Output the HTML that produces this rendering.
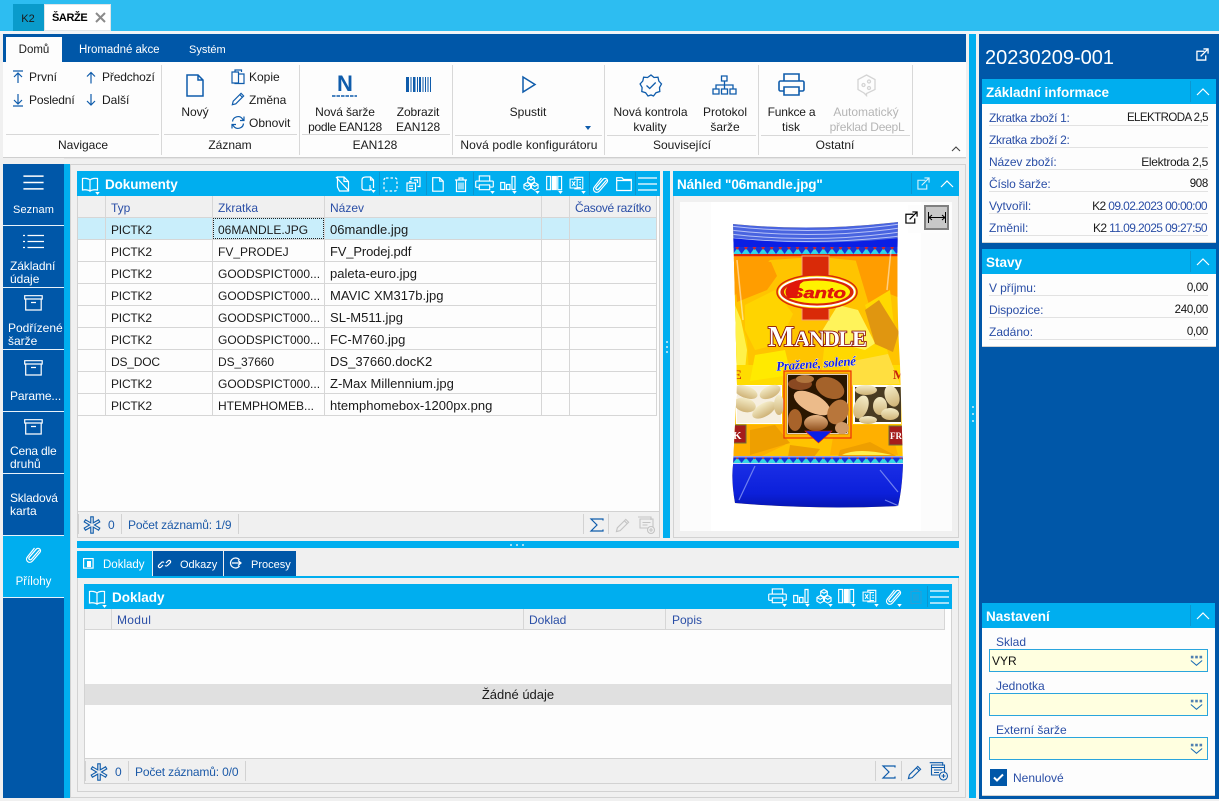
<!DOCTYPE html>
<html lang="cs"><head><meta charset="utf-8"><title>Šarže</title>
<style>
html,body{margin:0;padding:0;background:#f0f0f0}
#p{position:relative;width:1219px;height:801px;overflow:hidden;background:#f0f0f0;font-family:"Liberation Sans",sans-serif;font-size:12px;color:#1a1a1a}
#p div,#p span.t,#p svg{position:absolute}
.t{position:absolute;white-space:nowrap;line-height:16px}
.c{transform:translateX(-50%);text-align:center}
.r{transform:translateX(-100%)}
.w{color:#fff}.b{color:#1c5aa8}.l{color:#2a4ea6}.h{font-weight:bold;font-size:13.5px;color:#fff}
.g{color:#b5b5b5}
.n{font-size:13px;letter-spacing:.02px}
.v{font-size:11.5px;letter-spacing:-.3px;color:#111}
svg{overflow:visible}
.rb{fill:none;stroke:#0f5cab;stroke-width:1.2}
.wi{fill:none;stroke:#fff;stroke-width:1.2;color:#fff}
</style></head><body><div id="p">
<svg width="0" height="0" style="left:0;top:0"><defs>
<symbol id="prn" viewBox="0 0 20 18" overflow="visible"><path d="M4.500 6V1h11v5M4 13H1.500A.8.8 0 0 1 .7 12V7.200A.8.8 0 0 1 1.500 6.400h17a.8.8 0 0 1 .8.8V12a.8.8 0 0 1-.8.8H16M4.500 10.500h11v5h-11z"/></symbol>
<symbol id="bars" viewBox="0 0 16 18" overflow="visible"><path d="M.7 7.500h4v7h-4zM6.500 9.500h3.500v5H6.500zM12 1.500h3v13h-3z"/></symbol>
<symbol id="cube" viewBox="0 0 17 18" overflow="visible"><path d="M8.500 1.500l3.500 2v4l-3.500 2-3.500-2v-4zM4.500 8l3.500 2v4l-3.500 2-3.500-2v-4zM12.500 8l3.500 2v4l-3.500 2-3.500-2v-4zM5 3.500l3.500 2 3.500-2M1 10l3.500 2 3.500-2M9 10l3.500 2 3.500-2"/></symbol>
<symbol id="cols" viewBox="0 0 18 18" overflow="visible"><path d="M.7 1.500h4v14h-4zM12.500 1.500h4v14h-4z"/><path d="M6 1h5.500v15H6z" fill="currentColor" stroke="none"/></symbol>
<symbol id="xls" viewBox="0 0 17 18" overflow="visible"><path d="M6 3.500V1.500h9v13H6v-1M9 4h4M11 7h2M11 10h2M9 13h4"/><path d="M.7 3.500h8v10h-8zM3 6l3.500 5M6.500 6L3 11"/></symbol>
<symbol id="clip" viewBox="0 0 17 18" overflow="visible"><path d="M14.500 5L6.500 14.200c-1.400 1.600-3.600-.4-2.200-2L11.200 4.200c2.200-2.500 5.800.7 3.700 3.200L7.500 16c-3.200 3.500-8-.7-5-4.200L9.500 3"/></symbol>
<symbol id="ham" viewBox="0 0 19 16" overflow="visible"><path d="M0 2h19M0 8h19M0 14h19" stroke-width="1.300"/></symbol>
<symbol id="book" viewBox="0 0 18 16" overflow="visible"><path d="M9 3C7.500 1.500 4 1 1.500 1.500v11.500c2.500-.5 6-.2 7.500 1.200 1.500-1.400 5-1.700 7.500-1.200V1.500C14 1 10.500 1.500 9 3v11"/></symbol>
<symbol id="ext" viewBox="0 0 14 14" overflow="visible"><path d="M9 3.500H1v9.500h9.500V8M5 9l8-8M8 1h5v5"/></symbol>
<symbol id="up" viewBox="0 0 14 8" overflow="visible"><path d="M1 7l6-6 6 6"/></symbol>
<symbol id="snow" viewBox="0 0 16 16" overflow="visible"><path d="M8 1v14M1.900 4.500l12.200 7M1.900 11.500l12.200-7" fill="none" stroke="#0f5cab" stroke-width="3.600" stroke-linecap="square"/><path d="M8 1v14M1.900 4.500l12.200 7M1.900 11.500l12.200-7" fill="none" stroke="#f0f0f0" stroke-width="1.300" stroke-linecap="square"/></symbol>
<symbol id="dd" viewBox="1 1 15 12" overflow="visible"><path d="M2 1.500h3v3H2zM7 1.500h3v3H7zM12 1.500h3v3h-3z" fill="#4f7fb0" stroke="none"/><path d="M2 7l6.500 5.500L15 7" fill="none" stroke="#1c6db5" stroke-width="1.200"/></symbol>
<symbol id="pen" viewBox="0 0 16 16" overflow="visible"><path d="M1.500 14.500l1-4L11.500 1.500l3 3-9 9zM10 3l3 3"/></symbol>
<symbol id="tri" viewBox="0 0 6 4"><path d="M0 0h6L3 4z" fill="#fff"/></symbol>
<pattern id="zig" width="8.600" height="8" patternUnits="userSpaceOnUse" x="733" y="247"><rect width="8.600" height="8" fill="#1530d8"/><path d="M0 7L4.300 1l4.300 6z" fill="#33d6e6"/><path d="M2.300 0h4l-2 3z" fill="#d8202c"/></pattern>
<pattern id="zig2" width="8.600" height="6" patternUnits="userSpaceOnUse" x="733" y="457"><rect width="8.600" height="6" fill="#1530d8"/><path d="M0 6L4.300 .5l4.300 5.500z" fill="#33d6e6"/><path d="M2.500 0h3.600l-1.800 2.500z" fill="#d8202c"/></pattern>
<linearGradient id="bl" x1="0" y1="0" x2="0" y2="1"><stop offset="0" stop-color="#1a2ee6"/><stop offset=".65" stop-color="#0c20da"/><stop offset="1" stop-color="#0615b0"/></linearGradient>
<linearGradient id="al" x1="0" y1="0" x2="0" y2="1"><stop offset="0" stop-color="#e8b888"/><stop offset="1" stop-color="#8f4f1c"/></linearGradient>
<linearGradient id="al2" x1="0" y1="0" x2="0" y2="1"><stop offset="0" stop-color="#f4ecc8"/><stop offset="1" stop-color="#cfb377"/></linearGradient>
<clipPath id="bag"><path d="M733 224Q815 232 898 222Q896 300 900 365L903 465Q902 490 898 506Q815 510 735 503Q731 480 733 465L737 385Q735 300 733 224z"/></clipPath>
<filter id="sf"><feGaussianBlur stdDeviation=".35"/></filter>
</defs></svg>

<!-- top bar -->
<div style="left:0;top:0;width:1219px;height:31px;background:#2dbdf1"></div>
<div style="left:0;top:31px;width:1219px;height:3px;background:#f0f4f7"></div>
<div style="left:13px;top:4px;width:31px;height:27px;background:#0a9bcb"></div>
<span class="t c" style="left:28px;top:11px;font-size:11px">K2</span>
<div style="left:44px;top:4px;width:67px;height:27px;background:#fff;box-shadow:inset 0 0 0 1px #dfe5e8"></div>
<span class="t" style="left:52px;top:10px;font-size:11px;color:#000;font-weight:bold;letter-spacing:-.4px">ŠARŽE</span>
<svg style="left:95px;top:12px" width="11" height="11"><path d="M1 1l9 9M10 1l-9 9" stroke="#8a8a8a" stroke-width="2" fill="none"/></svg>

<!-- ribbon -->
<div style="left:3px;top:34px;width:963px;height:123px;background:#fdfdfd;border-bottom:1px solid #cfcfcf"></div>
<div style="left:3px;top:34px;width:963px;height:28px;background:#0057a8"></div>
<div style="left:6px;top:37px;width:56px;height:25px;background:#fdfdfd"></div>
<span class="t c" style="left:34px;top:42px;font-size:11.500px">Domů</span>
<span class="t w" style="left:79px;top:42px;font-size:11.500px;letter-spacing:-.05px">Hromadné akce</span>
<span class="t w" style="left:189px;top:42px;font-size:11px">Systém</span>

<div style="left:6px;top:134px;width:153px;height:1px;background:#d8d8d8"></div>
<div style="left:164px;top:134px;width:133px;height:1px;background:#d8d8d8"></div>
<div style="left:302px;top:134px;width:148px;height:1px;background:#d8d8d8"></div>
<div style="left:455px;top:135px;width:147px;height:1px;background:#d8d8d8"></div>
<div style="left:607px;top:135px;width:149px;height:1px;background:#d8d8d8"></div>
<div style="left:761px;top:135px;width:149px;height:1px;background:#d8d8d8"></div>
<div style="left:161px;top:65px;width:1px;height:90px;background:#d8d8d8"></div>
<div style="left:299px;top:65px;width:1px;height:90px;background:#d8d8d8"></div>
<div style="left:452px;top:65px;width:1px;height:90px;background:#d8d8d8"></div>
<div style="left:604px;top:65px;width:1px;height:90px;background:#d8d8d8"></div>
<div style="left:758px;top:65px;width:1px;height:90px;background:#d8d8d8"></div>
<div style="left:912px;top:65px;width:1px;height:90px;background:#d8d8d8"></div>

<span class="t c" style="left:83px;top:137px">Navigace</span>
<span class="t c" style="left:230px;top:137px">Záznam</span>
<span class="t c" style="left:375px;top:137px">EAN128</span>
<span class="t c" style="left:529px;top:137px;letter-spacing:.13px">Nová podle konfigurátoru</span>
<span class="t c" style="left:682px;top:137px">Související</span>
<span class="t c" style="left:835px;top:137px">Ostatní</span>

<svg class="rb" style="left:12px;top:70px" width="12" height="14"><path d="M1 1h10M6 13V3.500M2 7l4-4 4 4"/></svg>
<svg class="rb" style="left:85px;top:71px" width="12" height="13"><path d="M6 12.500V1.500M2 5.500l4-4 4 4"/></svg>
<svg class="rb" style="left:12px;top:93px" width="12" height="14"><path d="M1 13h10M6 1v9.500M2 7l4 4 4-4"/></svg>
<svg class="rb" style="left:85px;top:93px" width="12" height="13"><path d="M6 1v11M2 8l4 4 4-4"/></svg>
<span class="t" style="left:29px;top:69px">První</span>
<span class="t" style="left:102px;top:69px;letter-spacing:-.15px">Předchozí</span>
<span class="t" style="left:29px;top:92px;letter-spacing:-.15px">Poslední</span>
<span class="t" style="left:102px;top:92px">Další</span>

<svg class="rb" style="left:186px;top:74px;stroke-width:1.500" width="18" height="23"><path d="M1 1h11l5 5v16H1zM12 1v5h5"/></svg>
<span class="t c" style="left:195px;top:104px">Nový</span>
<svg class="rb" style="left:231px;top:69px" width="14" height="15"><path d="M4 3V1h6.500v2M1 3h6.500v11H1zM7.500 5H13v9.500H4V14"/></svg>
<svg class="rb" style="left:231px;top:92px;stroke-width:1.300" width="14" height="15"><use href="#pen" width="14" height="14"/></svg>
<svg class="rb" style="left:231px;top:115px" width="14" height="15"><path d="M1.500 6.500A5.500 5.500 0 0 1 11.500 4l1.300 1.500M13 1.500v4H9M12.500 8.500A5.500 5.500 0 0 1 2.500 11l-1.300-1.500M1 13.500v-4h4"/></svg>
<span class="t" style="left:249px;top:69px">Kopie</span>
<span class="t" style="left:249px;top:92px">Změna</span>
<span class="t" style="left:249px;top:115px">Obnovit</span>

<span class="t c" style="left:345px;top:72px;font-size:22px;line-height:24px;font-weight:bold;color:#0f5cab">N</span>
<svg style="left:332px;top:95px" width="25" height="2"><path d="M0 1h25" stroke="#0f5cab" stroke-width="1.500" stroke-dasharray="3.500 1"/></svg>
<span class="t c" style="left:345px;top:104px;letter-spacing:-.1px">Nová šarže</span>
<span class="t c" style="left:345px;top:119px;letter-spacing:-.3px">podle EAN128</span>
<svg style="left:406px;top:77px" width="25" height="15"><path d="M0 0h3v15H0zM4.500 0h1v15h-1zM7 0h2.500v15H7zM11 0h1v15h-1zM13 0h2v15h-2zM16.500 0h1v15h-1zM19 0h1v15h-1zM21.500 0h1v15h-1zM24 0h1v15h-1z" fill="#0f5cab"/></svg>
<span class="t c" style="left:418px;top:104px;letter-spacing:-.1px">Zobrazit</span>
<span class="t c" style="left:418px;top:119px;letter-spacing:-.1px">EAN128</span>

<svg class="rb" style="left:522px;top:76px;stroke-width:1.500" width="14" height="17"><path d="M1 1l12 7.500L1 16z"/></svg>
<span class="t c" style="left:528px;top:104px">Spustit</span>
<svg style="left:585px;top:126px" width="6" height="4"><path d="M0 0h6L3 4z" fill="#0f5cab"/></svg>

<svg class="rb" style="left:640px;top:74px;stroke-width:1.300" width="22" height="23"><path d="M11 1l3 2.500 4-.3 .8 3.800 2.700 3-2 3.500.3 4-3.800 1.200L13.500 22 11 21l-3 1-2.400-3.300-3.800-1.200.3-4-2-3.500 2.700-3L3.600 3.200l4 .3zM6.500 11.500l3.200 3 6-6"/></svg>
<span class="t c" style="left:650.500px;top:104px">Nová kontrola</span>
<span class="t c" style="left:650px;top:119px">kvality</span>
<svg class="rb" style="left:712px;top:75px;stroke-width:1.300" width="25" height="20"><path d="M9.500 1h5.500v5H9.500zM1 14h6v5H1zM9.500 14h6v5H9.500zM18 14h6v5h-6zM12.500 6v8M4 14v-4h17v4"/></svg>
<span class="t c" style="left:725px;top:104px">Protokol</span>
<span class="t c" style="left:725px;top:119px">šarže</span>

<svg class="rb" style="left:778px;top:73px;stroke-width:1.600" width="27" height="23"><path d="M6 8V1h15v7M6 18H2.500a1.500 1.500 0 0 1-1.500-1.500V9.500A1.500 1.500 0 0 1 2.500 8h22A1.500 1.500 0 0 1 26 9.500v7a1.500 1.500 0 0 1-1.500 1.500H21M6 14h15v8H6z"/></svg>
<span class="t c" style="left:791.500px;top:104px;letter-spacing:-.2px">Funkce a</span>
<span class="t c" style="left:791px;top:119px">tisk</span>
<svg style="left:857px;top:74px" width="19" height="22" fill="none" stroke="#d4d4d4" stroke-width="1.300"><path d="M9.500 1l8.500 4.500v10L9.500 19.500 9.500 21.500 7 19 1 15.500v-10z"/><circle cx="6.500" cy="11" r="1.500"/><circle cx="12" cy="7.500" r="1.500"/><circle cx="12" cy="14" r="1.500"/></svg>
<span class="t c g" style="left:866px;top:104px">Automatický</span>
<span class="t c g" style="left:867px;top:119px;letter-spacing:-.25px">překlad DeepL</span>
<svg style="left:951px;top:146px" width="10" height="6"><path d="M1 5l4-4 4 4" fill="none" stroke="#444" stroke-width="1.100"/></svg>

<!-- main frame -->
<div style="left:64px;top:158px;width:902px;height:1px;background:#e4e4e4"></div>
<div style="left:70px;top:164px;width:896px;height:634px;box-sizing:border-box;border:1px solid #d2d2d2"></div>
<div style="left:64px;top:164px;width:6px;height:634px;background:#00aeef"></div>
<div style="left:3px;top:164px;width:61px;height:634px;background:#0057a8"></div>
<div style="left:3px;top:536px;width:61px;height:61px;background:#00aeef"></div>
<div style="left:3px;top:225px;width:61px;height:1px;background:#e8f2fa"></div>
<div style="left:3px;top:287px;width:61px;height:1px;background:#e8f2fa"></div>
<div style="left:3px;top:349px;width:61px;height:1px;background:#e8f2fa"></div>
<div style="left:3px;top:411px;width:61px;height:1px;background:#e8f2fa"></div>
<div style="left:3px;top:473px;width:61px;height:1px;background:#e8f2fa"></div>
<div style="left:3px;top:535px;width:61px;height:1px;background:#e8f2fa"></div>
<div style="left:3px;top:597px;width:61px;height:1px;background:#e8f2fa"></div>
<svg style="left:23px;top:174px" width="21" height="17"><use href="#ham" width="21" height="17" stroke="#fff" fill="none"/></svg>
<span class="t c w" style="left:33.500px;top:202px;font-size:11px;letter-spacing:.1px">Seznam</span>
<svg style="left:23px;top:234px" width="21" height="15" fill="none" stroke="#fff" stroke-width="1.200"><path d="M4.500 1.500H21M4.500 7.500H21M4.500 13.500H21M0 1.500h2M0 7.500h2M0 13.500h2"/></svg>
<span class="t w" style="left:10px;top:258px;letter-spacing:-.1px">Základní</span>
<span class="t w" style="left:10px;top:271px">údaje</span>
<svg class="wi" style="left:24px;top:295px" width="19" height="16"><path d="M.7.700h17.500v3.300H.7zM1.700 4v11h15.500V4M7 7.500h5"/></svg>
<span class="t w" style="left:8px;top:320px">Podřízené</span>
<span class="t w" style="left:8px;top:333px">šarže</span>
<svg class="wi" style="left:24px;top:360px" width="19" height="16"><path d="M.7.700h17.500v3.300H.7zM1.700 4v11h15.500V4M7 7.500h5"/></svg>
<span class="t w" style="left:10px;top:388px;letter-spacing:-.1px">Parame...</span>
<svg class="wi" style="left:24px;top:419px" width="19" height="16"><path d="M.7.700h17.500v3.300H.7zM1.700 4v11h15.500V4M7 7.500h5"/></svg>
<span class="t w" style="left:10px;top:443px;letter-spacing:-.2px">Cena dle</span>
<span class="t w" style="left:10px;top:456px">druhů</span>
<span class="t w" style="left:10px;top:490px;letter-spacing:-.2px">Skladová</span>
<span class="t w" style="left:10px;top:503px">karta</span>
<svg class="wi" style="left:25px;top:545px" width="17" height="18"><use href="#clip" width="17" height="18"/></svg>
<span class="t c w" style="left:33.500px;top:574px;font-size:11.500px">Přílohy</span>

<!-- Dokumenty panel -->
<div style="left:77px;top:171px;width:583px;height:367px;box-sizing:border-box;border:1px solid #d2d2d2;background:#fdfdfd"></div>
<div style="left:77px;top:171px;width:583px;height:25px;background:#00aeef"></div>
<svg class="wi" style="left:81px;top:177px" width="18" height="16"><use href="#book" width="18" height="16"/></svg>
<svg style="left:95px;top:192px" width="5" height="3"><use href="#tri" width="5" height="3"/></svg>
<span class="t h" style="left:105px;top:177px;letter-spacing:-.1px">Dokumenty</span>

<svg class="wi" style="left:335px;top:176px" width="15" height="16"><path d="M2.500 1h6.500l4.500 4.500V15h-9L2.500 11zM1 1l13 14M9 1v4.500h4.500"/></svg>
<svg class="wi" style="left:361px;top:176px" width="14" height="16"><path d="M5 1h4.500l3 3v8M9.500 1v3h3M5 1Q1 1 1 4v8q0 2 3 2h5"/><path d="M9 9v5l2-1"/></svg>
<svg style="left:371px;top:190px" width="5" height="3"><use href="#tri" width="5" height="3"/></svg>
<svg class="wi" style="left:383px;top:177px;stroke-dasharray:2.500 2" width="15" height="15"><rect x="1" y="1" width="13" height="13" rx="2"/></svg>
<svg class="wi" style="left:406px;top:176px" width="15" height="16"><path d="M5 4V1.500h9v9h-2.500M3 5.500h2.500M1 7h8.500v8H1zM3 10h4M3 12.500h4M8 4h3.500v3"/></svg>
<svg class="wi" style="left:432px;top:177px" width="12" height="15"><path d="M.7.700h7l3.500 3.500v10H.7zM7.700.7v3.500h3.500"/></svg>
<svg class="wi" style="left:455px;top:177px" width="12" height="15"><path d="M0 3h12M4 3V1h4v2M1.500 3v11.500h9V3"/><path d="M4 5.500v7M6 5.500v7M8 5.500v7" stroke-width="1.100"/></svg>
<svg class="wi" style="left:475px;top:175px" width="19" height="17"><use href="#prn" width="19" height="17"/></svg>
<svg style="left:490px;top:191px" width="5" height="3"><use href="#tri" width="5" height="3"/></svg>
<svg class="wi" style="left:500px;top:175px" width="16" height="18"><use href="#bars" width="16" height="18"/></svg>
<svg style="left:512px;top:191px" width="5" height="3"><use href="#tri" width="5" height="3"/></svg>
<svg class="wi" style="left:523px;top:175px" width="16" height="17"><use href="#cube" width="16" height="17"/></svg>
<svg style="left:535px;top:191px" width="5" height="3"><use href="#tri" width="5" height="3"/></svg>
<svg class="wi" style="left:546px;top:175px;color:#fff" width="17" height="17"><use href="#cols" width="17" height="17"/></svg>
<svg style="left:558px;top:191px" width="5" height="3"><use href="#tri" width="5" height="3"/></svg>
<svg class="wi" style="left:569px;top:176px" width="16" height="16"><use href="#xls" width="16" height="16"/></svg>
<svg style="left:581px;top:191px" width="5" height="3"><use href="#tri" width="5" height="3"/></svg>
<svg class="wi" style="left:592px;top:175px" width="17" height="18"><use href="#clip" width="17" height="18"/></svg>
<svg class="wi" style="left:616px;top:177px" width="16" height="14"><path d="M.7 2.500V13.500H15.300V2.500H7.500L6 .7H.7zM.7 3.500h14.600"/></svg>
<svg class="wi" style="left:638px;top:176px" width="19" height="16"><use href="#ham" width="19" height="16"/></svg>
<svg style="left:379px;top:172px" width="1" height="23"><path d="M.5 0v23" stroke="#0c96d0"/></svg>
<svg style="left:426px;top:172px" width="1" height="23"><path d="M.5 0v23" stroke="#0c96d0"/></svg>
<svg style="left:473px;top:172px" width="1" height="23"><path d="M.5 0v23" stroke="#0c96d0"/></svg>
<svg style="left:589px;top:172px" width="1" height="23"><path d="M.5 0v23" stroke="#0c96d0"/></svg>
<svg style="left:635px;top:172px" width="1" height="23"><path d="M.5 0v23" stroke="#0c96d0"/></svg>

<div style="left:78px;top:196px;width:579px;height:22px;background:#f0f0f0"></div>
<div style="left:78px;top:218px;width:579px;height:21px;background:#c9eefb"></div>
<div style="left:78px;top:217px;width:579px;height:1px;background:#d6d6d6"></div>
<div style="left:78px;top:239px;width:579px;height:1px;background:#d6d6d6"></div>
<div style="left:78px;top:261px;width:579px;height:1px;background:#d6d6d6"></div>
<div style="left:78px;top:283px;width:579px;height:1px;background:#d6d6d6"></div>
<div style="left:78px;top:305px;width:579px;height:1px;background:#d6d6d6"></div>
<div style="left:78px;top:327px;width:579px;height:1px;background:#d6d6d6"></div>
<div style="left:78px;top:349px;width:579px;height:1px;background:#d6d6d6"></div>
<div style="left:78px;top:371px;width:579px;height:1px;background:#d6d6d6"></div>
<div style="left:78px;top:393px;width:579px;height:1px;background:#d6d6d6"></div>
<div style="left:78px;top:415px;width:579px;height:1px;background:#d6d6d6"></div>
<div style="left:105px;top:196px;width:1px;height:220px;background:#d6d6d6"></div>
<div style="left:212px;top:196px;width:1px;height:220px;background:#d6d6d6"></div>
<div style="left:324px;top:196px;width:1px;height:220px;background:#d6d6d6"></div>
<div style="left:541px;top:196px;width:1px;height:220px;background:#d6d6d6"></div>
<div style="left:569px;top:196px;width:1px;height:220px;background:#d6d6d6"></div>
<div style="left:656px;top:196px;width:1px;height:220px;background:#d6d6d6"></div>
<div style="left:213px;top:218px;width:111px;height:21px;box-sizing:border-box;border:1px dotted #222"></div>

<span class="t l" style="left:111px;top:200px">Typ</span>
<span class="t l" style="left:218px;top:200px">Zkratka</span>
<span class="t l" style="left:330px;top:200px">Název</span>
<span class="t l" style="left:575px;top:200px;letter-spacing:-.3px">Časové razítko</span>

<span class="t" style="left:111px;top:222px;letter-spacing:-.2px">PICTK2</span><span class="t" style="left:218px;top:222px">06MANDLE.JPG</span><span class="t n" style="left:330px;top:222px">06mandle.jpg</span>
<span class="t" style="left:111px;top:244px;letter-spacing:-.2px">PICTK2</span><span class="t" style="left:218px;top:244px">FV_PRODEJ</span><span class="t n" style="left:330px;top:244px;letter-spacing:-.15px">FV_Prodej.pdf</span>
<span class="t" style="left:111px;top:266px;letter-spacing:-.2px">PICTK2</span><span class="t" style="left:218px;top:266px">GOODSPICT000...</span><span class="t n" style="left:330px;top:266px">paleta-euro.jpg</span>
<span class="t" style="left:111px;top:288px;letter-spacing:-.2px">PICTK2</span><span class="t" style="left:218px;top:288px">GOODSPICT000...</span><span class="t n" style="left:330px;top:288px">MAVIC XM317b.jpg</span>
<span class="t" style="left:111px;top:310px;letter-spacing:-.2px">PICTK2</span><span class="t" style="left:218px;top:310px">GOODSPICT000...</span><span class="t n" style="left:330px;top:310px">SL-M511.jpg</span>
<span class="t" style="left:111px;top:332px;letter-spacing:-.2px">PICTK2</span><span class="t" style="left:218px;top:332px">GOODSPICT000...</span><span class="t n" style="left:330px;top:332px">FC-M760.jpg</span>
<span class="t" style="left:111px;top:354px;letter-spacing:-.2px">DS_DOC</span><span class="t" style="left:218px;top:354px;letter-spacing:-.1px">DS_37660</span><span class="t n" style="left:330px;top:354px">DS_37660.docK2</span>
<span class="t" style="left:111px;top:376px;letter-spacing:-.2px">PICTK2</span><span class="t" style="left:218px;top:376px">GOODSPICT000...</span><span class="t n" style="left:330px;top:376px">Z-Max Millennium.jpg</span>
<span class="t" style="left:111px;top:398px;letter-spacing:-.2px">PICTK2</span><span class="t" style="left:218px;top:398px">HTEMPHOMEB...</span><span class="t n" style="left:330px;top:398px">htemphomebox-1200px.png</span>

<!-- status 1 -->
<div style="left:78px;top:511px;width:581px;height:26px;background:#f0f0f0;border-top:1px solid #d2d2d2;box-sizing:border-box"></div>
<div style="left:78px;top:514px;width:1px;height:20px;background:#d2d2d2"></div>
<svg style="left:84px;top:517px" width="16" height="16"><use href="#snow" width="16" height="16"/></svg>
<span class="t b" style="left:108px;top:517px">0</span>
<div style="left:121px;top:514px;width:1px;height:20px;background:#d2d2d2"></div>
<span class="t b" style="left:128px;top:517px;letter-spacing:-.15px">Počet záznamů: 1/9</span>
<div style="left:238px;top:514px;width:1px;height:20px;background:#d2d2d2"></div>
<div style="left:583px;top:514px;width:1px;height:20px;background:#d2d2d2"></div>
<svg style="left:590px;top:518px" width="14" height="14"><path d="M13 2.500V1H1l6 6-6 6h12v-1.500" fill="none" stroke="#0f5cab" stroke-width="1.200"/></svg>
<div style="left:608px;top:514px;width:1px;height:20px;background:#d2d2d2"></div>
<svg style="left:615px;top:518px;fill:none;stroke:#c4c4c4;stroke-width:1.200" width="15" height="15"><use href="#pen" width="15" height="15"/></svg>
<svg style="left:637px;top:516px;fill:none;stroke:#c4c4c4;stroke-width:1.100" width="18" height="18"><path d="M1 1h13v3M3 3h13v9H3zM5.500 6.500h8M5.500 9h5"/><circle cx="14" cy="14" r="3.500" fill="#f0f0f0"/><path d="M12 14h4M14 12v4"/></svg>

<!-- vertical splitter -->
<div style="left:663px;top:171px;width:7px;height:367px;background:#00aeef"></div>
<div style="left:665.500px;top:341px;width:2px;height:2px;background:#9fdff7"></div>
<div style="left:665.500px;top:346px;width:2px;height:2px;background:#9fdff7"></div>
<div style="left:665.500px;top:351px;width:2px;height:2px;background:#9fdff7"></div>

<!-- Nahled -->
<div style="left:673px;top:171px;width:286px;height:367px;box-sizing:border-box;border:1px solid #d2d2d2;background:#f0f0f0"></div>
<div style="left:673px;top:171px;width:286px;height:25px;background:#00aeef"></div>
<span class="t h" style="left:677px;top:177px;letter-spacing:-.1px">Náhled "06mandle.jpg"</span>
<div style="left:911px;top:173px;width:1px;height:21px;background:#0c96d0"></div>
<svg class="wi" style="left:917px;top:177px;stroke:#d6f2fc" width="13" height="13"><use href="#ext" width="13" height="13"/></svg>
<svg class="wi" style="left:940px;top:180px" width="14" height="8"><use href="#up" width="14" height="8"/></svg>
<div style="left:680px;top:202px;width:272px;height:329px;background:#fcfcfc"></div>
<div style="left:711px;top:202px;width:210px;height:329px;background:#fff"></div>

<svg style="left:680px;top:202px" width="272" height="329" viewBox="680 202 272 329">
<g clip-path="url(#bag)">
<rect x="725" y="215" width="185" height="300" fill="#ffc400"/>
<path d="M725 257H905V300L880 290 870 262 830 258 800 258 770 260 730 300z" fill="#ff9d00"/>
<path d="M733 258l38 4 6 14-10 14-30 12zM855 258h45v22l-30 28-6-20z" fill="#ff9d00"/>
<path d="M745 305l30-15 18 24-14 30-24 6-10-20zM733 300l14 40 3 50-17-5z" fill="#ffd400"/>
<path d="M733 300l8 20 6 30-3 30-11 0z" fill="#fff14a"/>
<path d="M838 305l20 5 18 35-16 30-30-6-8-38z" fill="#fff35a"/>
<path d="M865 305l25-15 5 45-14 20zM825 340l40 10 18-12 12 35-75 12z" fill="#ffd800"/>
<path d="M865 310l14-10 20 32-6 20-18-8z" fill="#e09610"/>
<path d="M733 365h55v20h-55zM848 365h52v22h-52z" fill="#ffdc00"/>
<path d="M755 355l30-5 6 25-41 6z" fill="#ffea00"/>
<path d="M848 362l40-8 12 30-48 2z" fill="#ffdf40"/>
<path d="M735 425h50v20l-25 12h-27zM835 425h55l8 30h-68z" fill="#ffb000"/>
<path d="M750 430l25-5 15 18-40 12zM790 445l30 4-6 8h-26zM840 450l30-8 28 15h-60z" fill="#ee9f00"/>
<path d="M842 455q15-8 50 0z" fill="#fff04e"/>
<rect x="725" y="215" width="185" height="32" fill="#4964e0"/>
<path d="M730 226Q815 236 900 224M730 230Q815 240 900 228M730 234Q815 244 900 232M730 238Q815 246 900 236" fill="none" stroke="#b7c2f7" stroke-width="1"/>
<path d="M733 223Q815 230 898 221" fill="none" stroke="#fff" stroke-width="1.500" stroke-dasharray="1.500 1.500"/>
<path d="M730 238Q815 247 900 238V248H730z" fill="#0a1fe4"/>
<rect x="725" y="247" width="185" height="7" fill="url(#zig)"/>
<rect x="725" y="254" width="185" height="2" fill="#d8260a"/>
<rect x="725" y="256" width="185" height="1" fill="#ff7a10"/>
<rect x="802" y="256" width="27" height="64" fill="#d92a08" stroke="#f6a070" stroke-width="1"/>
<ellipse cx="817" cy="292" rx="40" ry="17" fill="#ffd800" stroke="#d9260a" stroke-width="1.500"/>
<ellipse cx="817" cy="292" rx="37.500" ry="14.500" fill="#d9260a" stroke="#fff" stroke-width="1.800"/>
<ellipse cx="817" cy="292" rx="33" ry="11.500" fill="#fff200"/>
<path d="M788 286q8-8 16-5l-4 3-3 14h-9q-5-6 0-12z" fill="#e0160a"/>
<text x="790" y="298" font-family="Liberation Sans" font-weight="bold" font-style="italic" font-size="15" fill="#e0160a" stroke="#e0160a" stroke-width=".5" textLength="56" lengthAdjust="spacingAndGlyphs">Santo</text>
<g font-family="Liberation Serif" font-weight="bold" paint-order="stroke" stroke="#8c1208" stroke-width="1.800" fill="#fff">
<text x="768" y="346" font-size="28">M</text>
<text x="794" y="346" font-size="22.500" textLength="73">ANDLE</text>
</g>
<text x="776" y="368" font-family="Liberation Serif" font-weight="bold" font-style="italic" font-size="13" fill="#1420e0" stroke="#fff" stroke-width=".6" paint-order="stroke" transform="rotate(-4 815 362)" textLength="80">Pražené, solené</text>
<text x="733" y="379" font-family="Liberation Serif" font-weight="bold" font-size="13" fill="#c8260a">E</text>
<text x="893" y="379" font-family="Liberation Serif" font-weight="bold" font-size="13" fill="#c8260a">M</text>
<!-- left window -->
<rect x="736" y="385" width="46" height="39" fill="#fff"/>
<g filter="url(#sf)"><rect x="737" y="386" width="44" height="37" fill="#f6efe0"/>
<ellipse cx="746" cy="392" rx="12" ry="6" fill="url(#al2)" transform="rotate(20 746 392)"/>
<ellipse cx="770" cy="392" rx="11" ry="6" fill="url(#al2)" transform="rotate(-25 770 392)"/>
<ellipse cx="745" cy="405" rx="11" ry="7" fill="url(#al2)" transform="rotate(15 745 405)"/>
<ellipse cx="764" cy="410" rx="13" ry="6.500" fill="url(#al2)" transform="rotate(-30 764 410)"/>
<ellipse cx="779" cy="405" rx="5" ry="10" fill="url(#al2)"/></g>
<!-- right window -->
<rect x="853" y="385" width="48" height="39" fill="#fff"/>
<g filter="url(#sf)"><rect x="855" y="387" width="46" height="35" fill="#4a3a24"/>
<ellipse cx="866" cy="390" rx="11" ry="5" fill="url(#al2)"/>
<ellipse cx="861" cy="407" rx="7" ry="12" fill="url(#al2)" transform="rotate(20 861 407)"/>
<ellipse cx="880" cy="406" rx="7" ry="9" fill="url(#al2)"/>
<ellipse cx="892" cy="396" rx="7" ry="11" fill="url(#al2)" transform="rotate(-20 892 396)"/>
<ellipse cx="890" cy="414" rx="9" ry="6" fill="url(#al2)"/>
<ellipse cx="868" cy="420" rx="9" ry="4" fill="url(#al2)"/></g>
<!-- badges -->
<rect x="733" y="425" width="13" height="18" fill="#a51c1c" stroke="#6e6e3a"/>
<text x="733" y="439" font-family="Liberation Serif" font-weight="bold" font-size="11" fill="#fff">K</text>
<rect x="889" y="426" width="15" height="19" fill="#a51c1c" stroke="#6e6e3a"/>
<text x="890" y="439" font-family="Liberation Serif" font-weight="bold" font-size="9" fill="#fff">FR</text>
<!-- center photo -->
<rect x="784" y="371" width="67" height="67" fill="#ffb400" stroke="#e8300a" stroke-width="1.200"/>
<rect x="787" y="374" width="61" height="60" fill="#fff" stroke="#a06030" stroke-width=".6"/>
<g filter="url(#sf)"><rect x="788" y="375" width="59" height="58" fill="#2a1206"/>
<ellipse cx="800" cy="384" rx="12" ry="6" fill="#8a4a20"/>
<ellipse cx="830" cy="388" rx="15" ry="10" fill="#a4622c" transform="rotate(25 830 388)"/>
<ellipse cx="812" cy="403" rx="20" ry="9" fill="#ecbb8a" transform="rotate(28 812 403)"/>
<ellipse cx="795" cy="420" rx="7" ry="11" fill="#a8642a"/>
<ellipse cx="816" cy="423" rx="12" ry="8" fill="url(#al)"/>
<ellipse cx="838" cy="412" rx="10" ry="13" fill="#b8763a" transform="rotate(30 838 412)"/>
<ellipse cx="842" cy="428" rx="7" ry="6" fill="#d09a68"/>
<ellipse cx="805" cy="379" rx="9" ry="4" fill="#b0743e"/></g>
<path d="M805 431h27l-13.500 12z" fill="#0a1fe4" stroke="#e8300a" stroke-width=".6"/>
<!-- lower band -->
<rect x="725" y="456" width="185" height="1.500" fill="#8fa0f0"/>
<rect x="725" y="457.500" width="185" height="5.500" fill="url(#zig2)"/>
<rect x="725" y="463" width="185" height="1" fill="#cfd6fa"/>
<rect x="725" y="464" width="185" height="45" fill="url(#bl)"/>
<path d="M755 466l-16 34M885 500l14 6M880 470l18 22" fill="none" stroke="#6f80f0" stroke-width="1.200"/>
<path d="M737 260l6 60M891 250l-4 40" fill="none" stroke="#fff" stroke-opacity=".5" stroke-width="1.500"/>
</g>
</svg>
<div style="left:908px;top:205px;width:44px;height:28px;background:#fcfcfc;opacity:.8"></div>
<svg style="left:905px;top:211px;fill:none;stroke:#000;stroke-width:1.300" width="13" height="13"><use href="#ext" width="13" height="13"/></svg>
<div style="left:924px;top:205px;width:25px;height:25px;box-sizing:border-box;background:#c8c8c8;border:2px solid #808080"></div>
<svg style="left:928px;top:212px" width="18" height="11" fill="none" stroke="#000" stroke-width="1"><path d="M.5 0v11M17.500 0v11M1 5.500h16M4 3L1 5.500 4 8M14 3l3 2.500L14 8"/></svg>

<!-- horizontal splitter -->
<div style="left:77px;top:541px;width:882px;height:7px;background:#00aeef"></div>
<div style="left:510px;top:544px;width:2px;height:2px;background:#9fdff7"></div>
<div style="left:516px;top:544px;width:2px;height:2px;background:#9fdff7"></div>
<div style="left:522px;top:544px;width:2px;height:2px;background:#9fdff7"></div>

<!-- tabs -->
<div style="left:77px;top:551px;width:75px;height:25px;background:#00aeef"></div>
<div style="left:153px;top:551px;width:70px;height:25px;background:#0057a8"></div>
<div style="left:224px;top:551px;width:72px;height:25px;background:#0057a8"></div>
<div style="left:77px;top:576px;width:882px;height:2px;background:#00aeef"></div>
<svg class="wi" style="left:83px;top:558px" width="11" height="11"><rect x=".6" y=".6" width="9.500" height="9.500"/><path d="M4 3h4v6H4z" fill="#fff" stroke="none"/></svg>
<span class="t w" style="left:103px;top:557px;font-size:11.500px">Doklady</span>
<svg class="wi" style="left:158px;top:558px" width="13" height="12"><path d="M5 7l-2.500 2.500a1.500 1.500 0 0 1-2-2L3.500 4.500a1.800 1.800 0 0 1 2.500 0M8 5l2.500-2.500a1.500 1.500 0 0 1 2 2L9.500 7.500a1.800 1.800 0 0 1-2.500 0"/></svg>
<span class="t w" style="left:180px;top:557px;font-size:11px">Odkazy</span>
<svg class="wi" style="left:229px;top:557px" width="12" height="12"><path d="M10.500 3A5 5 0 1 0 10.500 9M3 6h9M9 3.500L12 6 9 8.500"/></svg>
<span class="t w" style="left:251px;top:557px;font-size:11px">Procesy</span>

<!-- lower panel -->
<div style="left:77px;top:578px;width:882px;height:214px;box-sizing:border-box;border:1px solid #d2d2d2;border-top:0"></div>
<div style="left:84px;top:584px;width:868px;height:200px;box-sizing:border-box;border:1px solid #d2d2d2;background:#fdfdfd"></div>
<div style="left:84px;top:584px;width:868px;height:25px;background:#00aeef"></div>
<svg class="wi" style="left:88px;top:590px" width="18" height="16"><use href="#book" width="18" height="16"/></svg>
<svg style="left:102px;top:605px" width="5" height="3"><use href="#tri" width="5" height="3"/></svg>
<span class="t h" style="left:112px;top:590px">Doklady</span>
<svg class="wi" style="left:768px;top:588px" width="19" height="17"><use href="#prn" width="19" height="17"/></svg>
<svg style="left:782px;top:604px" width="5" height="3"><use href="#tri" width="5" height="3"/></svg>
<svg class="wi" style="left:793px;top:588px" width="16" height="18"><use href="#bars" width="16" height="18"/></svg>
<svg style="left:805px;top:604px" width="5" height="3"><use href="#tri" width="5" height="3"/></svg>
<svg class="wi" style="left:816px;top:588px" width="16" height="17"><use href="#cube" width="16" height="17"/></svg>
<svg style="left:828px;top:604px" width="5" height="3"><use href="#tri" width="5" height="3"/></svg>
<svg class="wi" style="left:838px;top:588px;color:#fff" width="17" height="17"><use href="#cols" width="17" height="17"/></svg>
<svg style="left:851px;top:604px" width="5" height="3"><use href="#tri" width="5" height="3"/></svg>
<svg class="wi" style="left:862px;top:589px" width="16" height="16"><use href="#xls" width="16" height="16"/></svg>
<svg style="left:874px;top:604px" width="5" height="3"><use href="#tri" width="5" height="3"/></svg>
<svg class="wi" style="left:885px;top:587px" width="17" height="18"><use href="#clip" width="17" height="18"/></svg>
<svg style="left:897px;top:604px" width="5" height="3"><use href="#tri" width="5" height="3"/></svg>
<svg style="left:910px;top:589px;fill:none;stroke:#2a9fd6;stroke-width:1.100" width="12" height="15"><path d="M1 2.500h10v12H1zM4 2.500V.7h4v1.800M4 5v7M6 5v7M8 5v7"/></svg>
<div style="left:927px;top:586px;width:1px;height:21px;background:#0c96d0"></div>
<svg class="wi" style="left:930px;top:589px" width="19" height="16"><use href="#ham" width="19" height="16"/></svg>

<div style="left:85px;top:609px;width:860px;height:20px;background:#f0f0f0;border-bottom:1px solid #d6d6d6"></div>
<div style="left:111px;top:609px;width:1px;height:20px;background:#d6d6d6"></div>
<div style="left:523px;top:609px;width:1px;height:20px;background:#d6d6d6"></div>
<div style="left:665px;top:609px;width:1px;height:20px;background:#d6d6d6"></div>
<div style="left:944px;top:609px;width:1px;height:21px;background:#d6d6d6"></div>
<span class="t l" style="left:117px;top:612px;letter-spacing:.3px">Modul</span>
<span class="t l" style="left:529px;top:612px">Doklad</span>
<span class="t l" style="left:672px;top:612px">Popis</span>
<div style="left:85px;top:684px;width:866px;height:21px;background:#e0e0e0"></div>
<span class="t c" style="left:518px;top:687px;font-size:13px">Žádné údaje</span>

<div style="left:85px;top:758px;width:866px;height:25px;background:#f0f0f0;border-top:1px solid #d2d2d2;box-sizing:border-box"></div>
<div style="left:85px;top:761px;width:1px;height:20px;background:#d2d2d2"></div>
<svg style="left:91px;top:764px" width="16" height="16"><use href="#snow" width="16" height="16"/></svg>
<span class="t b" style="left:115px;top:764px">0</span>
<div style="left:128px;top:761px;width:1px;height:20px;background:#d2d2d2"></div>
<span class="t b" style="left:135px;top:764px;letter-spacing:-.15px">Počet záznamů: 0/0</span>
<div style="left:245px;top:761px;width:1px;height:20px;background:#d2d2d2"></div>
<div style="left:875px;top:761px;width:1px;height:20px;background:#d2d2d2"></div>
<svg style="left:882px;top:765px" width="14" height="14"><path d="M13 2.500V1H1l6 6-6 6h12v-1.500" fill="none" stroke="#0f5cab" stroke-width="1.200"/></svg>
<div style="left:901px;top:761px;width:1px;height:20px;background:#d2d2d2"></div>
<svg style="left:907px;top:765px;fill:none;stroke:#0f5cab;stroke-width:1.200" width="15" height="15"><use href="#pen" width="15" height="15"/></svg>
<svg style="left:929px;top:762px;fill:none;stroke:#0f5cab;stroke-width:1.100" width="19" height="19"><path d="M.7.700h13v3M2.500 3h13v10h-13zM2.500 5.500h13M5 8h8M5 10.500h5"/><circle cx="14.500" cy="14" r="4" fill="#f0f0f0"/><path d="M12.500 14h4M14.500 12v4"/></svg>

<!-- right side -->
<div style="left:969px;top:34px;width:7px;height:764px;background:#00aeef"></div>
<div style="left:971.500px;top:406px;width:2px;height:2px;background:#9fdff7"></div>
<div style="left:971.500px;top:413px;width:2px;height:2px;background:#9fdff7"></div>
<div style="left:971.500px;top:420px;width:2px;height:2px;background:#9fdff7"></div>
<div style="left:979px;top:34px;width:240px;height:765px;background:#0057a8"></div>
<span class="t w" style="left:985px;top:46px;font-size:20px;line-height:24px">20230209-001</span>
<svg class="wi" style="left:1196px;top:48px;stroke-width:1.400" width="13" height="13"><use href="#ext" width="13" height="13"/></svg>

<div style="left:982px;top:79px;width:234px;height:163px;background:#fdfdfd;border-bottom:1px solid #d2d2d2"></div>
<div style="left:982px;top:79px;width:234px;height:25px;background:#00aeef"></div>
<span class="t h" style="left:986px;top:85px">Základní informace</span>
<div style="left:1190px;top:81px;width:1px;height:21px;background:#0c96d0"></div>
<svg class="wi" style="left:1196px;top:88px" width="14" height="8"><use href="#up" width="14" height="8"/></svg>
<div style="left:989px;top:125px;width:219px;height:1px;background:#e2e2e2"></div>
<div style="left:989px;top:147px;width:219px;height:1px;background:#e2e2e2"></div>
<div style="left:989px;top:169px;width:219px;height:1px;background:#e2e2e2"></div>
<div style="left:989px;top:191px;width:219px;height:1px;background:#e2e2e2"></div>
<div style="left:989px;top:213px;width:219px;height:1px;background:#e2e2e2"></div>
<div style="left:989px;top:235px;width:219px;height:1px;background:#e2e2e2"></div>
<span class="t l" style="left:989px;top:110px;letter-spacing:-.3px">Zkratka zboží 1:</span>
<span class="t r" style="left:1208px;top:110px;font-size:11.500px;letter-spacing:-.55px">ELEKTRODA 2,5</span>
<span class="t l" style="left:989px;top:132px;letter-spacing:-.3px">Zkratka zboží 2:</span>
<span class="t l" style="left:989px;top:154px;letter-spacing:-.15px">Název zboží:</span>
<span class="t r" style="left:1208px;top:154px;letter-spacing:-.3px">Elektroda 2,5</span>
<span class="t l" style="left:989px;top:176px;letter-spacing:-.15px">Číslo šarže:</span>
<span class="t r v" style="left:1208px;top:176px">908</span>
<span class="t l" style="left:989px;top:198px">Vytvořil:</span>
<span class="t r" style="left:1207px;top:198px;letter-spacing:-.6px">K2 <span class="l">09.02.2023 00:00:00</span></span>
<span class="t l" style="left:989px;top:220px">Změnil:</span>
<span class="t r" style="left:1207px;top:220px;letter-spacing:-.6px">K2 <span class="l">11.09.2025 09:27:50</span></span>

<div style="left:982px;top:249px;width:234px;height:97px;background:#fdfdfd;border-bottom:1px solid #d2d2d2"></div>
<div style="left:982px;top:249px;width:234px;height:25px;background:#00aeef"></div>
<span class="t h" style="left:986px;top:255px">Stavy</span>
<div style="left:1190px;top:251px;width:1px;height:21px;background:#0c96d0"></div>
<svg class="wi" style="left:1196px;top:258px" width="14" height="8"><use href="#up" width="14" height="8"/></svg>
<div style="left:989px;top:295px;width:219px;height:1px;background:#e2e2e2"></div>
<div style="left:989px;top:317px;width:219px;height:1px;background:#e2e2e2"></div>
<div style="left:989px;top:339px;width:219px;height:1px;background:#e2e2e2"></div>
<span class="t l" style="left:989px;top:280px;letter-spacing:-.1px">V příjmu:</span><span class="t r v" style="left:1208px;top:280px">0,00</span>
<span class="t l" style="left:989px;top:302px;letter-spacing:-.1px">Dispozice:</span><span class="t r v" style="left:1208px;top:302px">240,00</span>
<span class="t l" style="left:989px;top:324px">Zadáno:</span><span class="t r v" style="left:1208px;top:324px">0,00</span>

<div style="left:982px;top:603px;width:233px;height:192px;background:#fdfdfd;border-bottom:1px solid #d2d2d2"></div>
<div style="left:982px;top:603px;width:233px;height:25px;background:#00aeef"></div>
<span class="t h" style="left:986px;top:609px">Nastavení</span>
<div style="left:1190px;top:605px;width:1px;height:21px;background:#0c96d0"></div>
<svg class="wi" style="left:1196px;top:612px" width="14" height="8"><use href="#up" width="14" height="8"/></svg>

<span class="t l" style="left:996px;top:634px">Sklad</span>
<div style="left:989px;top:649px;width:219px;height:23px;box-sizing:border-box;border:1px solid #2aa5dd;background:#ffffe0"></div>
<span class="t" style="left:992px;top:653px;color:#111">VYR</span>
<svg style="left:1190px;top:655px" width="13" height="11"><use href="#dd" width="13" height="11"/></svg>
<span class="t l" style="left:996px;top:678px">Jednotka</span>
<div style="left:989px;top:693px;width:219px;height:23px;box-sizing:border-box;border:1px solid #2aa5dd;background:#ffffe0"></div>
<svg style="left:1190px;top:699px" width="13" height="11"><use href="#dd" width="13" height="11"/></svg>
<span class="t l" style="left:996px;top:722px">Externí šarže</span>
<div style="left:989px;top:737px;width:219px;height:23px;box-sizing:border-box;border:1px solid #2aa5dd;background:#ffffe0"></div>
<svg style="left:1190px;top:743px" width="13" height="11"><use href="#dd" width="13" height="11"/></svg>
<div style="left:990px;top:769px;width:17px;height:17px;background:#0057a8"></div>
<svg style="left:993px;top:773px" width="11" height="9"><path d="M1 4.500l3 3 6-6" fill="none" stroke="#fff" stroke-width="2"/></svg>
<span class="t l" style="left:1013px;top:770px">Nenulové</span>
</div></body></html>
